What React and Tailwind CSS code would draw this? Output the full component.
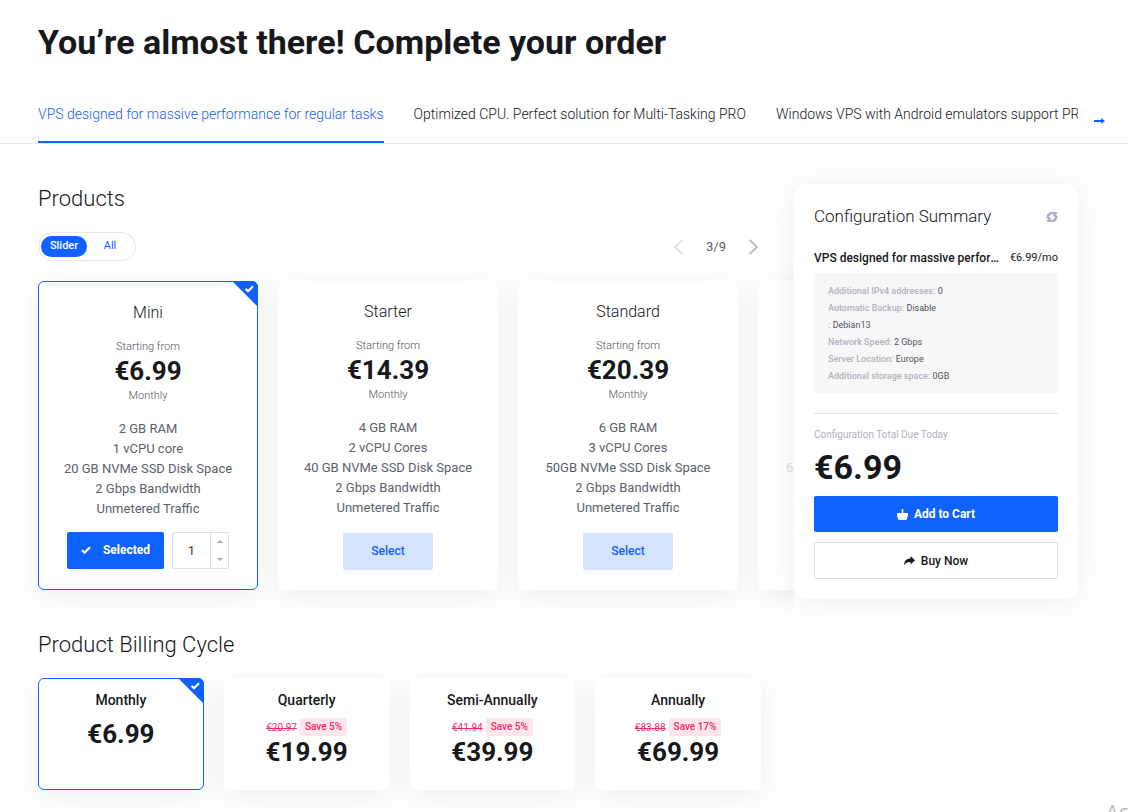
import React from "react";

const products = [
  {
    name: "Mini",
    price: "€6.99",
    specs: ["2 GB RAM", "1 vCPU core", "20 GB NVMe SSD Disk Space", "2 Gbps Bandwidth", "Unmetered Traffic"],
    selected: true,
  },
  {
    name: "Starter",
    price: "€14.39",
    specs: ["4 GB RAM", "2 vCPU Cores", "40 GB NVMe SSD Disk Space", "2 Gbps Bandwidth", "Unmetered Traffic"],
  },
  {
    name: "Standard",
    price: "€20.39",
    specs: ["6 GB RAM", "3 vCPU Cores", "50GB NVMe SSD Disk Space", "2 Gbps Bandwidth", "Unmetered Traffic"],
  },
];

const cycles = [
  { name: "Monthly", price: "€6.99", selected: true },
  { name: "Quarterly", price: "€19.99", old: "€20.97", save: "Save 5%" },
  { name: "Semi-Annually", price: "€39.99", old: "€41.94", save: "Save 5%" },
  { name: "Annually", price: "€69.99", old: "€83.88", save: "Save 17%" },
];

const options = [
  ["Additional IPv4 addresses", "0"],
  ["Automatic Backup", "Disable"],
  ["", "Debian13"],
  ["Network Speed", "2 Gbps"],
  ["Server Location", "Europe"],
  ["Additional storage space", "0GB"],
];

function Check({ className }) {
  return (
    <svg viewBox="0 0 10 8" className={className} fill="none" stroke="currentColor" strokeWidth="2.2" aria-hidden="true">
      <path d="M1 4.2 3.6 6.6 9 1.2" />
    </svg>
  );
}

function Corner() {
  return (
    <svg viewBox="0 0 26 26" className="absolute -right-px -top-px h-[26px] w-[26px]" aria-hidden="true">
      <path d="M0 0H20a6 6 0 0 1 6 6V26Z" fill="#0f62fe" />
      <path d="M13.6 7.8 16 10.2 21 5.2" fill="none" stroke="#fff" strokeWidth="2.2" />
    </svg>
  );
}

function ProductCard({ item }) {
  return (
    <article
      className={
        "relative flex h-[309px] w-[220px] shrink-0 flex-col items-center rounded-md border bg-white shadow-[0_6px_30px_rgba(0,0,0,0.07)] " +
        (item.selected ? "border-[#0f62fe] pt-[21px]" : "border-transparent pt-5")
      }
    >
      {item.selected && <Corner />}
      <h3 className="text-base leading-5 font-light text-[#16181b]">{item.name}</h3>
      <p className="mt-4 text-[11px] leading-4 font-light text-[#4f545e]">Starting from</p>
      <p className="text-[26px] leading-8 font-bold text-[#16181b]">{item.price}</p>
      <p className="text-[11px] leading-[18px] font-light text-[#4f545e]">Monthly</p>
      <ul className="mt-[14px] text-center text-[13px] leading-5 text-[#5b5f6b]">
        {item.specs.map((s) => (
          <li key={s}>{s}</li>
        ))}
      </ul>
      {item.selected ? (
        <div className="mt-[13px] flex gap-2">
          <button className="flex h-[37px] w-[97px] items-center justify-center gap-3 rounded-[2px] bg-[#0f62fe] pb-[2px] text-xs font-bold text-white">
            <Check className="h-2 w-[10px]" />
            Selected
          </button>
          <div className="flex h-[37px] w-[57px] rounded-[2px] border border-[#dddfe3]">
            <input aria-label="Quantity" defaultValue="1" className="w-0 flex-1 text-center text-[13px] text-[#33363d] outline-none" />
            <div className="flex w-[18px] flex-col border-l border-[#dddfe3] text-[#a9a9a9]">
              <button aria-label="Increase" className="flex flex-1 items-center justify-center">
                <svg viewBox="0 0 6 3" className="h-[3px] w-[6px]" fill="currentColor"><path d="M0 3 3 0 6 3Z" /></svg>
              </button>
              <button aria-label="Decrease" className="flex flex-1 items-center justify-center">
                <svg viewBox="0 0 6 3" className="h-[3px] w-[6px]" fill="currentColor"><path d="M0 0 3 3 6 0Z" /></svg>
              </button>
            </div>
          </div>
        </div>
      ) : (
        <button className="mt-[15px] h-[37px] w-[90px] rounded-[2px] bg-[#d6e3ff] pb-[2px] text-xs font-medium text-[#0f62fe]">Select</button>
      )}
    </article>
  );
}

function CycleCard({ item }) {
  return (
    <button
      className={
        "relative flex h-[112px] flex-col items-center rounded-md border bg-white pt-3 text-[#16181b] shadow-[0_6px_30px_rgba(0,0,0,0.07)] " +
        (item.selected ? "border-[#0f62fe]" : "border-transparent")
      }
    >
      {item.selected && <Corner />}
      <span className="text-sm leading-[18px] font-medium">{item.name}</span>
      {item.old && (
        <span className="mt-[9px] flex h-[18px] items-center gap-[3px] text-[10px] text-[#f0286c]">
          <s>{item.old}</s>
          <span className="rounded-[2px] bg-[#ffe5ea] px-[5px] leading-[18px] font-medium">{item.save}</span>
        </span>
      )}
      <span className={"text-[26px] leading-8 font-bold " + (item.old ? "" : "mt-[9px]")}>{item.price}</span>
    </button>
  );
}

export default function App() {
  return (
    <div className="relative min-h-screen overflow-hidden bg-white font-['Roboto',sans-serif] text-[#16181b]">
      <header className="border-b border-[#e6e6e6]">
        <h1 className="pt-5 pl-[38px] text-[34px] leading-[44px] font-bold">You’re almost there! Complete your order</h1>
        <div className="mt-[22px] flex pl-[38px]">
          <nav className="flex flex-1 gap-[30px] overflow-hidden text-sm font-light whitespace-nowrap">
            <a href="#regular" className="h-[57px] border-b-2 border-[#0f62fe] pt-[18px] leading-5 text-[#0f62fe]">
              VPS designed for massive performance for regular tasks
            </a>
            <a href="#cpu" className="pt-[18px] leading-5">Optimized CPU. Perfect solution for Multi-Tasking PRO</a>
            <a href="#android" className="pt-[18px] leading-5">Windows VPS with Android emulators support PRO</a>
          </nav>
          <button aria-label="Next plans" className="flex w-[50px] items-center pt-3 pl-4 text-[#0f62fe]">
            <svg viewBox="0 0 11 6" className="h-[6px] w-[11px]" fill="currentColor"><path d="M0 2.1H7.2V0L11 3 7.2 6V3.9H0Z" /></svg>
          </button>
        </div>
      </header>

      <div className="flex items-start pr-[50px] pl-[38px]">
        <main className="min-w-0 flex-1 pt-10 pr-[33px]">
          <h2 className="text-[22px] leading-[30px] font-light">Products</h2>
          <div className="mt-[18px] flex items-center justify-between">
            <div className="flex h-[29px] w-[98px] items-center rounded-full border border-[#e6e6e6] p-[2px] text-[11px] text-[#0f62fe]">
              <button className="h-[21px] w-[46px] rounded-full bg-[#0f62fe] pb-px font-medium text-white">Slider</button>
              <button className="h-[21px] w-[46px] pb-px">All</button>
            </div>
            <div className="flex items-center gap-[23px] pr-[3px] text-[13px] text-[#5b5f6b]">
              <button aria-label="Previous products" className="text-[#d5d7dc]">
                <svg viewBox="0 0 9 16" className="h-4 w-[9px]" fill="none" stroke="currentColor" strokeWidth="1.3"><path d="M8.5.8 1 8l7.500 7.200" /></svg>
              </button>
              <span>3/9</span>
              <button aria-label="Next products" className="text-[#b1b4c0]">
                <svg viewBox="0 0 9 16" className="h-4 w-[9px]" fill="none" stroke="currentColor" strokeWidth="1.7"><path d="M.5.8 8 8 .5 15.200" /></svg>
              </button>
            </div>
          </div>

          <section aria-label="Products" className="-mr-[33px] -ml-[38px] flex gap-5 overflow-hidden pt-5 pb-10 pl-[38px]">
            {products.map((p) => (
              <ProductCard key={p.name} item={p} />
            ))}
            <article className="h-[309px] w-[220px] shrink-0 rounded-md bg-white pt-[177px] pl-7 text-[13px] leading-5 text-[#d8d9dc] shadow-[0_6px_30px_rgba(0,0,0,0.07)]">
              6
            </article>
          </section>

          <h2 className="text-[22px] leading-[30px] font-light">Product Billing Cycle</h2>
          <section aria-label="Product Billing Cycle" className="mt-[18px] grid grid-cols-4 gap-5 pb-5">
            {cycles.map((c) => (
              <CycleCard key={c.name} item={c} />
            ))}
          </section>
        </main>

        <aside className="relative mt-10 w-[284px] shrink-0 rounded-xl bg-white px-5 pt-5 pb-5 shadow-[0_2px_30px_rgba(0,0,0,0.07)]">
          <div className="flex h-[25px] items-center justify-between">
            <h2 className="text-[17px] font-light">Configuration Summary</h2>
            <button aria-label="Refresh" className="text-[#aeb0bd]">
              <svg viewBox="0 0 12 12" className="h-3 w-3" fill="currentColor">
                <path d="M.5 7.500C.3 3.500 2.500.9 6 .9H11.300L9.600 5.600H6.800L7.700 3C5 2.700 3 4.200 2.600 7.500Z" />
                <path d="M11.500 4.500C11.700 8.500 9.500 11.100 6 11.100H.7L2.400 6.400H5.200L4.300 9C7 9.300 9 7.800 9.400 4.500Z" />
              </svg>
            </button>
          </div>
          <div className="mt-[19px] flex items-center gap-[10px] text-xs leading-5">
            <h3 className="min-w-0 flex-1 truncate font-medium">VPS designed for massive performance for regular tasks</h3>
            <span className="text-[11px]">€6.99/mo</span>
          </div>
          <ul className="mt-[5px] rounded-[3px] bg-[#f7f7f7] px-[14px] pt-[10px] pb-2 text-[9px] text-[#b1b3bd]">
            {options.map(([label, value]) => (
              <li key={value} className="leading-[17px] font-medium">
                {label}: <span className="font-normal text-[#50545f]">{value}</span>
              </li>
            ))}
          </ul>
          <div className="mt-5 border-t border-[#e3e3e3] pt-[13px]">
            <p className="text-[10px] leading-4 text-[#b1b3bd]">Configuration Total Due Today</p>
            <p className="mt-1 text-[34px] leading-10 font-bold">€6.99</p>
          </div>
          <button className="mt-[9px] flex h-9 w-full items-center justify-center gap-[6px] rounded-[2px] bg-[#0f62fe] text-xs font-bold text-white">
            <svg viewBox="0 0 11 11" className="h-[11px] w-[11px]" fill="currentColor">
              <path d="M4.700 0H6.300V4H11V6L9.900 10.200 9 11H2L1.100 10.200 0 6V4H4.700Z" />
            </svg>
            Add to Cart
          </button>
          <button className="mt-[10px] flex h-[37px] w-full items-center justify-center gap-[6px] rounded-[2px] border border-[#dddddd] text-xs font-medium">
            <svg viewBox="0 0 11 10" className="h-[10px] w-[11px]" fill="currentColor">
              <path d="M6.500 0 11 4.300 6.500 8.500V6.100C3.500 6 1.500 6.800 0 9.300.2 5 2.500 2.600 6.500 2.500Z" />
            </svg>
            Buy Now
          </button>
        </aside>
      </div>

      <span className="absolute -bottom-[14px] left-[1106px] font-['Open_Sans',sans-serif] text-xl leading-7 text-[#b9b9b9]">Ac</span>
    </div>
  );
}
